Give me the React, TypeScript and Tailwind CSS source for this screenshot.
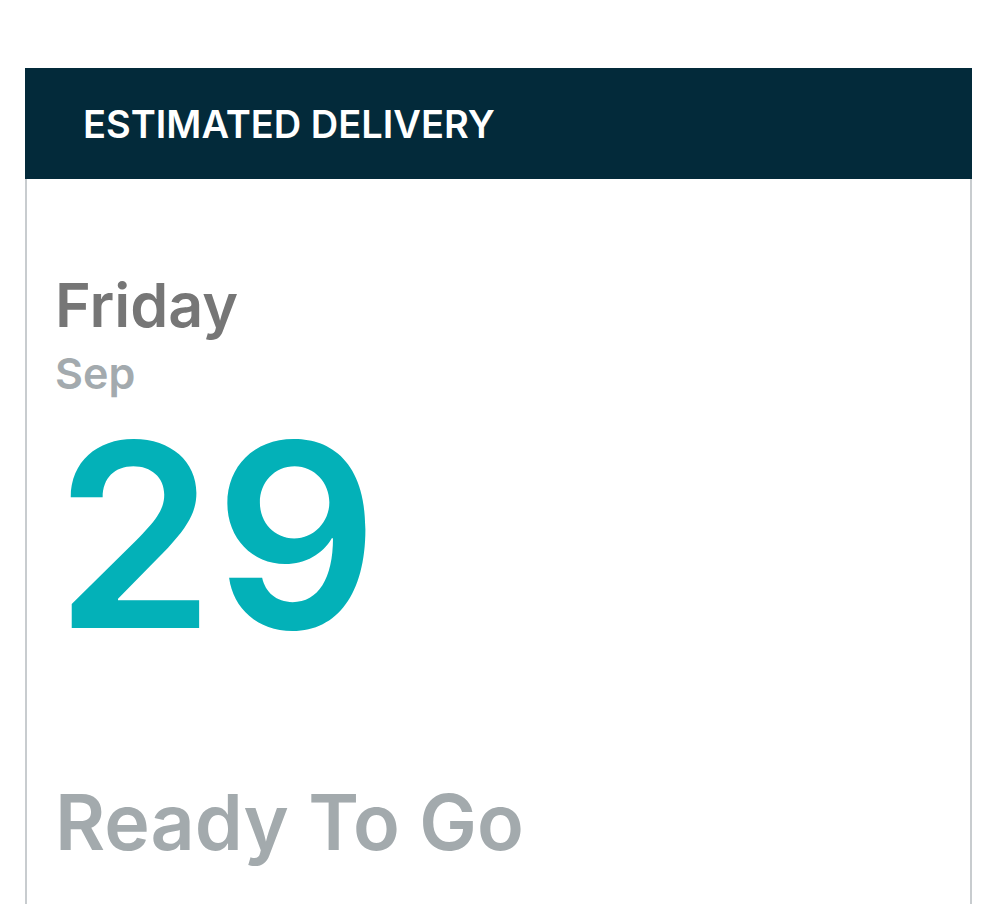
export default function App() {
  return (
    <div className="min-h-screen bg-white pt-[68px] pl-[25px] pr-[27px] font-['Inter',sans-serif]">
      <div className="border-x-2 border-[#c8cccf] min-h-[836px]">
        <div className="h-[111px] -mx-[2px] bg-[#032a3a] flex items-center pl-[58px]">
          <h2 className="text-[38px] leading-none font-semibold text-white">
            ESTIMATED DELIVERY
          </h2>
        </div>
        <div className="pl-[28px] pt-[96px] flex flex-col items-start">
          <p className="text-[61px] leading-none font-semibold text-[#767676]">Friday</p>
          <p className="text-[43px] leading-none font-semibold text-[#a3aaae] mt-[16px]">Sep</p>
          <p className="text-[256px] leading-[0.8] font-semibold text-[#03b1b8] mt-[38px]">29</p>
          <p className="text-[77px] leading-none font-semibold text-[#a3aaad] mt-[146px]">Ready To Go</p>
        </div>
      </div>
    </div>
  );
}
